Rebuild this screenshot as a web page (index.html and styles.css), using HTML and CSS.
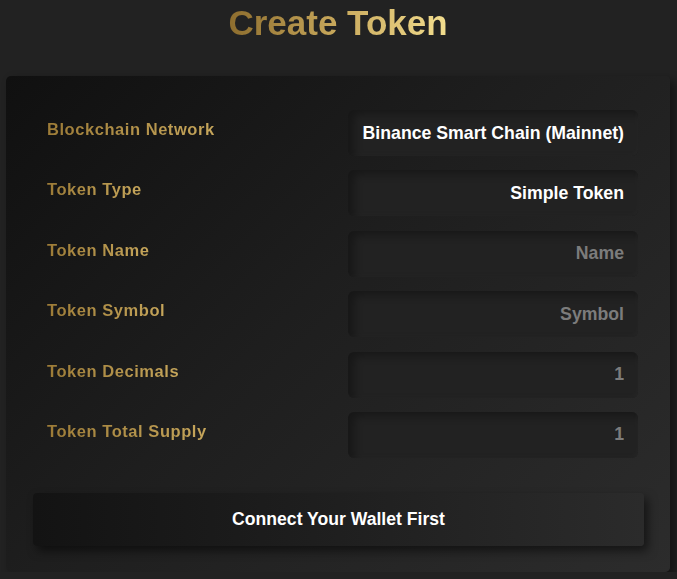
FILE: index.html
```html
<!DOCTYPE html>
<html lang="en">
<head>
<meta charset="utf-8">
<title>Create Token</title>
<link rel="stylesheet" href="styles.css">
</head>
<body>
<div class="page">
  <h1 class="title"><span class="gold">Create Token</span></h1>
  <div class="card">
    <div class="form">
      <label class="label"><span class="gold-sm">Blockchain Network</span></label>
      <div class="field value">Binance Smart Chain (Mainnet)</div>
      <label class="label"><span class="gold-sm">Token Type</span></label>
      <div class="field value">Simple Token</div>
      <label class="label"><span class="gold-sm">Token Name</span></label>
      <input class="field" type="text" placeholder="Name">
      <label class="label"><span class="gold-sm">Token Symbol</span></label>
      <input class="field" type="text" placeholder="Symbol">
      <label class="label"><span class="gold-sm">Token Decimals</span></label>
      <input class="field" type="text" placeholder="1">
      <label class="label"><span class="gold-sm">Token Total Supply</span></label>
      <input class="field" type="text" placeholder="1">
    </div>
    <button class="btn" type="button">Connect Your Wallet First</button>
  </div>
</div>
</body>
</html>
```
FILE: styles.css
```css
html, body {
  margin: 0;
  padding: 0;
  background: #222222;
  font-family: "Liberation Sans", Arial, sans-serif;
}

.page {
  padding: 0 7px 0 6px;
}

.title {
  margin: 3px 0 34px;
  text-align: center;
  font-size: 35px;
  font-weight: bold;
  line-height: 39px;
}

.gold {
  display: inline-block;
  background: linear-gradient(90deg, #8d6d2e 0%, #c9a95c 50%, #f3de8f 100%);
  -webkit-background-clip: text;
  background-clip: text;
  color: transparent;
}

.card {
  background: linear-gradient(135deg, #101010 0%, #1e1e1e 45%, #2c2c2c 100%);
  border-radius: 5px;
  box-shadow: 5px 4px 10px rgba(0, 0, 0, 0.45);
  padding: 34px 26px 26px 27px;
}

.form {
  display: grid;
  grid-template-columns: 1fr 290px;
  row-gap: 14.4px;
  padding: 0 6px 0 14px;
}

.label {
  padding-top: 10px;
  font-size: 16.5px;
  font-weight: bold;
  letter-spacing: 0.55px;
  line-height: 18px;
}

.gold-sm {
  display: inline-block;
  background: linear-gradient(90deg, #9c7b37 0%, #c6a65b 100%);
  -webkit-background-clip: text;
  background-clip: text;
  color: transparent;
}

.field {
  box-sizing: border-box;
  height: 46px;
  width: 290px;
  margin: 0;
  border: none;
  outline: none;
  border-radius: 6px;
  background: #222222;
  box-shadow: inset 6px 4px 9px rgba(0, 0, 0, 0.32), inset -2px -2px 4px rgba(255, 255, 255, 0.02);
  padding: 0 14px;
  font-family: "Liberation Sans", Arial, sans-serif;
  font-size: 17.7px;
  font-weight: bold;
  color: #ffffff;
  text-align: right;
}

.value {
  display: flex;
  align-items: center;
  justify-content: flex-end;
  white-space: nowrap;
}

.field::placeholder {
  color: #7c7c7c;
  opacity: 1;
}

.btn {
  display: block;
  box-sizing: border-box;
  width: 611px;
  height: 53px;
  margin-top: 35px;
  border: none;
  border-radius: 4px;
  background: linear-gradient(90deg, #131313 0%, #1f1f1f 50%, #2b2b2b 100%);
  box-shadow: 4px 5px 10px rgba(0, 0, 0, 0.5);
  color: #ffffff;
  font-family: "Liberation Sans", Arial, sans-serif;
  font-size: 17.6px;
  font-weight: bold;
  cursor: pointer;
}
```
